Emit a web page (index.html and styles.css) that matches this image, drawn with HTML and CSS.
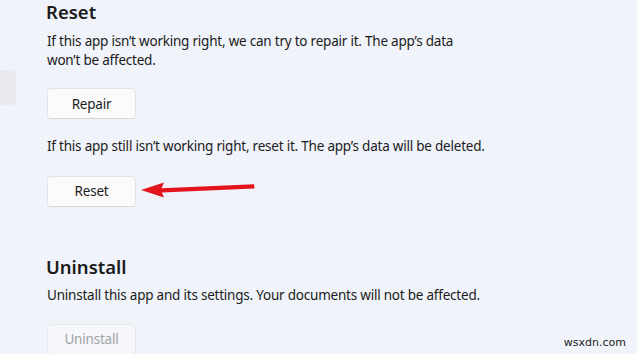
FILE: index.html
```html
<!DOCTYPE html>
<html>
<head>
<meta charset="utf-8">
<link rel="stylesheet" href="styles.css">
</head>
<body>
<div class="page">
  <aside class="sidebar">
    <div class="nav-item"></div>
  </aside>
  <main class="content">
    <section class="section">
      <h2 class="title">Reset</h2>
      <p class="desc">If this app isn’t working right, we can try to repair it. The app’s data<br>won’t be affected.</p>
      <button class="btn btn-repair">Repair</button>
      <p class="desc desc-reset">If this app still isn’t working right, reset it. The app’s data will be deleted.</p>
      <button class="btn btn-reset">Reset</button>
    </section>
    <section class="section section-uninstall">
      <h2 class="title">Uninstall</h2>
      <p class="desc desc-uninstall">Uninstall this app and its settings. Your documents will not be affected.</p>
      <button class="btn btn-disabled" disabled>Uninstall</button>
    </section>
  </main>
</div>
<svg class="arrow" width="120" height="20" viewBox="0 0 120 20">
  <path d="M1 10 L24 2.5 L21.5 8.2 L114 4.2 L114.5 8.6 L21.8 12.4 L24 17.5 Z" fill="#e3141b"/>
</svg>
<div class="watermark">wsxdn.com</div>
</body>
</html>
```
FILE: styles.css
```css
html, body {
  margin: 0;
  padding: 0;
}
body {
  width: 637px;
  height: 354px;
  overflow: hidden;
  position: relative;
  background: #f0f3f9;
  font-family: "Noto Sans", "Open Sans", sans-serif;
  color: #1b1b1b;
}
.page {
  display: flex;
}
.sidebar {
  width: 16px;
  flex: none;
  padding-top: 70px;
}
.nav-item {
  height: 35px;
  background: #e8eaef;
  border-radius: 0 4px 4px 0;
}
.content {
  padding-left: 30px;
  padding-top: 2px;
  display: flex;
  flex-direction: column;
}
.section {
  display: flex;
  flex-direction: column;
  align-items: flex-start;
}
.title {
  margin: 0;
  font-size: 18.5px;
  line-height: 20px;
  font-weight: 600;
}
.desc {
  margin: 9.5px 0 0 1px;
  font-size: 13.5px;
  letter-spacing: -0.22px;
  line-height: 19px;
}
.desc-reset {
  margin-top: 17.5px;
}
.btn {
  margin: 18.5px 0 0 1px;
  width: 89px;
  height: 31px;
  border: 1px solid #e3e4e7;
  border-bottom-color: #d6d7da;
  border-radius: 4px;
  background: #fbfbfc;
  font-family: inherit;
  font-size: 13.5px;
  letter-spacing: -0.2px;
  color: #1b1b1b;
  padding: 0;
}
.btn-reset {
  margin-top: 20px;
}
.section-uninstall {
  margin-top: 50px;
}
.desc-uninstall {
  margin-top: 9px;
}
.btn-disabled {
  margin-top: 19px;
  color: #a0a2a6;
  background: #f6f7fa;
  border-color: #e6e8ec;
}
.arrow {
  position: absolute;
  left: 140px;
  top: 180px;
}
.watermark {
  position: absolute;
  right: 11px;
  bottom: 5px;
  font-family: "DejaVu Sans", sans-serif;
  font-size: 11px;
  color: #1b1b1b;
}
```
